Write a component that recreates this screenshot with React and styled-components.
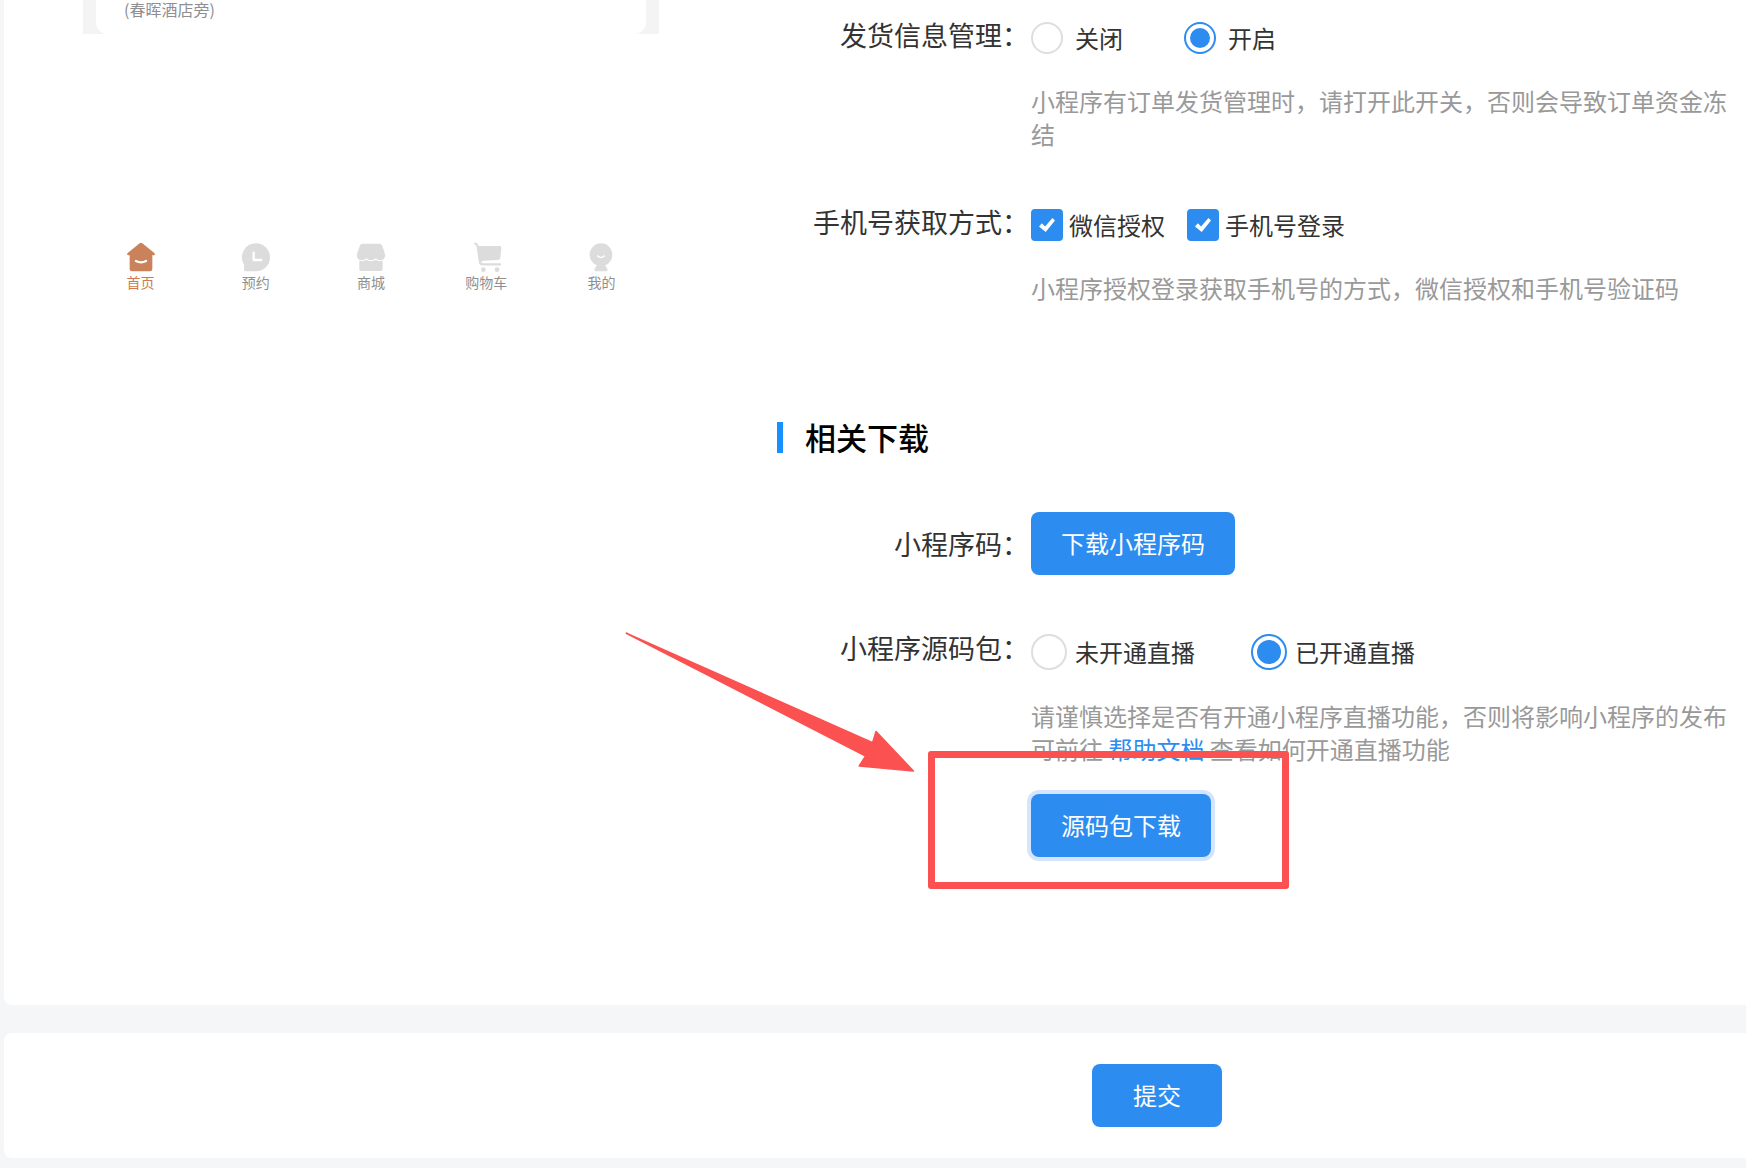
import React from "react";
import styled, { createGlobalStyle } from "styled-components";

const blue = "#2d8cf0";
const red = "#fb5151";

const GlobalStyle = createGlobalStyle`
  * { box-sizing: border-box; }
  body {
    margin: 0;
    background: #f5f6f8;
    color: #333;
    font-family: "Noto Sans CJK SC", "Noto Sans", sans-serif;
    font-size: 24px;
  }
  button, input { font: inherit; margin: 0; }
`;

const Page = styled.div`
  display: flex;
  flex-direction: column;
  gap: 28px;
  padding: 0 0 9px 4px;
`;

const Panel = styled.main`
  display: flex;
  gap: 118px;
  padding: 0 10px 148px 79px;
  background: #fff;
  border-radius: 0 0 0 8px;
`;

const Phone = styled.aside`
  display: flex;
  flex-direction: column;
  flex: 0 0 576px;
  gap: 208px;
`;

const ShopArea = styled.div`
  height: 34px;
  padding: 0 13px;
  background: #f4f4f4;
`;

const ShopCard = styled.div`
  height: 100%;
  padding: 0 28px;
  background: #fff;
  border-radius: 0 0 12px 12px;
  color: #8e8e93;
  font-size: 16px;
  line-height: 18px;
`;

const TabBar = styled.nav`
  display: grid;
  grid-template-columns: repeat(5, 1fr);
`;

const Tab = styled.a`
  display: flex;
  flex-direction: column;
  align-items: center;
  color: ${(p) => (p.$active ? "#cf7a4e" : "#8f8f8f")};
  font-size: 14px;
  line-height: 20px;
  text-decoration: none;

  svg {
    width: 30px;
    height: 30px;
    overflow: visible;
    color: ${(p) => (p.$active ? "#c9825a" : "#dcdcdc")};
  }
`;

const Form = styled.form`
  flex: 1;
  min-width: 0;
  padding-top: 20px;
`;

const Rows = styled.div`
  display: flex;
  flex-direction: column;
  gap: ${(p) => p.$gap}px;
`;

const Row = styled.div`
  display: grid;
  grid-template-columns: 254px minmax(0, 1fr);
  align-items: ${(p) => (p.$center ? "center" : "start")};
`;

const RowLabel = styled.div`
  padding-right: 2px;
  font-size: 27px;
  line-height: 30px;
  text-align: right;
  white-space: nowrap;
`;

const Options = styled.div`
  display: flex;
  align-items: center;
  gap: ${(p) => p.$gap}px;
  height: ${(p) => (p.$tall ? 38 : 36)}px;
`;

const Option = styled.label`
  display: flex;
  align-items: center;
  gap: ${(p) => p.$gap}px;
  line-height: 36px;
  white-space: nowrap;
  cursor: pointer;
`;

const Radio = styled.input.attrs({ type: "radio" })`
  appearance: none;
  display: grid;
  place-items: center;
  width: ${(p) => p.$size}px;
  height: ${(p) => p.$size}px;
  border: 2px solid #dcdee2;
  border-radius: 50%;
  background: #fff;

  &:checked { border-color: ${blue}; }
  &:checked::after {
    content: "";
    width: ${(p) => p.$dot}px;
    height: ${(p) => p.$dot}px;
    border-radius: 50%;
    background: ${blue};
  }
`;

const Checkbox = styled.input.attrs({ type: "checkbox" })`
  appearance: none;
  display: grid;
  place-items: center;
  width: 32px;
  height: 32px;
  border: 2px solid #dcdee2;
  border-radius: 4px;
  background: #fff;

  &:checked { border-color: ${blue}; background: ${blue}; }
  &:checked::after {
    content: "";
    width: 16px;
    height: 14px;
    background: #fff;
    clip-path: polygon(0 60%, 18% 38%, 38% 60%, 84% 0, 100% 18%, 42% 100%);
  }
`;

const Hint = styled.p`
  margin: 28px 0 0;
  color: #999;
  line-height: 33px;

  a { color: ${blue}; text-decoration: none; }
`;

const SectionTitle = styled.h2`
  margin: 118px 0 59px;
  padding: 0 0 2px 22px;
  border-left: 6px solid #1890ff;
  color: #000;
  font-size: 31px;
  font-weight: 500;
  line-height: 29px;
`;

const Button = styled.button`
  height: 63px;
  padding: 0 ${(p) => (p.$wide ? 41 : 30)}px 2px;
  border: 0;
  border-radius: 8px;
  background: ${blue};
  color: #fff;
  font-size: 24px;
  cursor: pointer;
  box-shadow: ${(p) => (p.$focused ? "0 0 0 4px #d5e5fd" : "none")};
`;

const Marked = styled.div`
  position: relative;
  width: fit-content;
  margin-top: 29px;
  line-height: 0;
`;

const MarkBox = styled.div`
  position: absolute;
  left: -103px;
  top: -43px;
  width: 361px;
  height: 138px;
  border: 7px solid ${red};
  border-radius: 3px;
  pointer-events: none;
`;

const MarkArrow = styled.svg`
  position: absolute;
  left: -431px;
  top: -184px;
  width: 320px;
  height: 170px;
  pointer-events: none;
`;

const Footer = styled.footer`
  display: flex;
  justify-content: center;
  padding: 31px 0 31px 564px;
  background: #fff;
  border-radius: 8px 0 0 8px;
`;

const HomeIcon = () => (
  <svg viewBox="0 0 90 90" aria-hidden="true">
    <path d="M41 4Q45 1 49 4L85 33Q89 38 84 40H79V81Q79 88 72 88H18Q11 88 11 81V40H6Q1 38 5 33Z" fill="currentColor" />
    <path d="M30 57Q45 65 60 57" fill="none" stroke="#fff" strokeWidth="7" strokeLinecap="round" />
  </svg>
);

const ClockIcon = () => (
  <svg viewBox="0 0 90 90" aria-hidden="true">
    <path d="M45 4A42 42 0 0 1 45 88H14Q9 88 9 83V68A42 42 0 0 1 45 4Z" fill="currentColor" />
    <path d="M38 32V54H61" fill="none" stroke="#fff" strokeWidth="7" strokeLinecap="round" strokeLinejoin="round" />
  </svg>
);

const StoreIcon = () => (
  <svg viewBox="0 0 90 90" aria-hidden="true">
    <path d="M10 54H80V82Q80 87 75 87H15Q10 87 10 82Z" fill="currentColor" />
    <path d="M20 5H70Q76 5 78 10L87 36C89 46 82 55 73 55Q64 55 59 49Q53 55 45 55Q37 55 31 49Q26 55 17 55C8 55 1 46 3 36L12 10Q14 5 20 5Z" fill="currentColor" stroke="#fff" strokeWidth="6" paintOrder="stroke" />
  </svg>
);

const CartIcon = () => (
  <svg viewBox="0 0 90 90" aria-hidden="true">
    <path d="M13 5Q18 6 20 14L27 60Q28 67 35 67H87" fill="none" stroke="currentColor" strokeWidth="7" strokeLinecap="round" />
    <path d="M20 12H87Q91 12 91 17L88 48Q87 54 81 54L38 56Q32 57 27 60Z" fill="currentColor" />
    <circle cx="37" cy="83" r="7" fill="currentColor" />
    <circle cx="78" cy="83" r="7" fill="currentColor" />
  </svg>
);

const UserIcon = () => (
  <svg viewBox="0 0 90 90" aria-hidden="true">
    <circle cx="45" cy="38" r="34" fill="currentColor" />
    <path d="M35 66H55L64 80Q66 88 60 88H30Q24 88 26 80Z" fill="currentColor" />
    <path d="M35 42Q45 51 55 42" fill="none" stroke="#fff" strokeWidth="5" strokeLinecap="round" />
  </svg>
);

const tabs = [
  { name: "首页", Icon: HomeIcon, active: true },
  { name: "预约", Icon: ClockIcon },
  { name: "商城", Icon: StoreIcon },
  { name: "购物车", Icon: CartIcon },
  { name: "我的", Icon: UserIcon },
];

function RadioGroup({ name, labelledBy, options, selected, large }) {
  return (
    <Options role="radiogroup" aria-labelledby={labelledBy} $gap={large ? 56 : 61} $tall={large}>
      {options.map((text) => (
        <Option key={text} $gap={large ? 8 : 12}>
          <Radio
            name={name}
            value={text}
            defaultChecked={text === selected}
            $size={large ? 36 : 32}
            $dot={large ? 24 : 20}
          />
          {text}
        </Option>
      ))}
    </Options>
  );
}

export default function App() {
  return (
    <>
      <GlobalStyle />
      <Page lang="zh-CN">
        <Panel>
          <Phone>
            <ShopArea>
              <ShopCard>(春晖酒店旁)</ShopCard>
            </ShopArea>
            <TabBar>
              {tabs.map(({ name, Icon, active }) => (
                <Tab key={name} href="#" $active={active}>
                  <Icon />
                  {name}
                </Tab>
              ))}
            </TabBar>
          </Phone>

          <Form id="settings" onSubmit={(e) => e.preventDefault()}>
            <Rows $gap={57}>
              <Row>
                <RowLabel id="delivery">发货信息管理：</RowLabel>
                <div>
                  <RadioGroup name="delivery" labelledBy="delivery" options={["关闭", "开启"]} selected="开启" />
                  <Hint>小程序有订单发货管理时，请打开此开关，否则会导致订单资金冻结</Hint>
                </div>
              </Row>
              <Row>
                <RowLabel id="phone">手机号获取方式：</RowLabel>
                <div>
                  <Options role="group" aria-labelledby="phone" $gap={22}>
                    <Option $gap={6}>
                      <Checkbox defaultChecked />
                      微信授权
                    </Option>
                    <Option $gap={6}>
                      <Checkbox defaultChecked />
                      手机号登录
                    </Option>
                  </Options>
                  <Hint>小程序授权登录获取手机号的方式，微信授权和手机号验证码</Hint>
                </div>
              </Row>
            </Rows>

            <SectionTitle>相关下载</SectionTitle>

            <Rows $gap={58}>
              <Row $center>
                <RowLabel>小程序码：</RowLabel>
                <div>
                  <Button type="button">下载小程序码</Button>
                </div>
              </Row>
              <Row>
                <RowLabel id="source">小程序源码包：</RowLabel>
                <div>
                  <RadioGroup name="source" labelledBy="source" options={["未开通直播", "已开通直播"]} selected="已开通直播" large />
                  <Hint>
                    请谨慎选择是否有开通小程序直播功能，否则将影响小程序的发布
                    <br />
                    可前往 <a href="#">帮助文档</a> 查看如何开通直播功能
                  </Hint>
                  <Marked>
                    <Button type="button" $focused>源码包下载</Button>
                    <MarkBox />
                    <MarkArrow viewBox="0 0 960 510" aria-hidden="true">
                      <path
                        d="M79 70L818 398L828 365L940 483L778 468L797 438Z"
                        fill={red}
                        stroke={red}
                        strokeWidth="5"
                        strokeLinejoin="round"
                      />
                    </MarkArrow>
                  </Marked>
                </div>
              </Row>
            </Rows>
          </Form>
        </Panel>

        <Footer>
          <Button type="submit" form="settings" $wide>提交</Button>
        </Footer>
      </Page>
    </>
  );
}
